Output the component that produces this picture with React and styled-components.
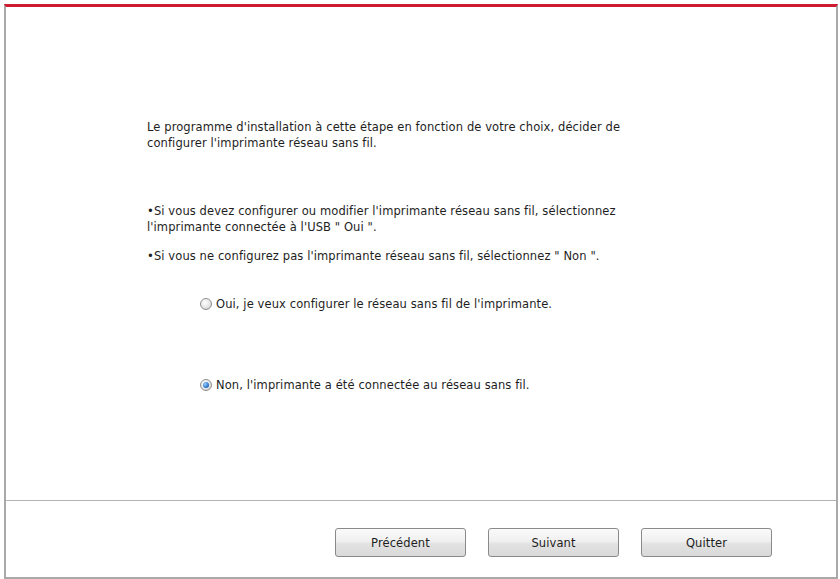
import React from "react";
import styled, { createGlobalStyle } from "styled-components";

const Global = createGlobalStyle`
  html, body { margin: 0; padding: 0; background: #ffffff; }
  body { font-family: "DejaVu Sans", "Liberation Sans", sans-serif; }
`;

const Page = styled.div`
  width: 840px;
  height: 579px;
  box-sizing: border-box;
  padding: 4px 2px 0 4px;
  background: #ffffff;
`;

const Window = styled.div`
  height: 100%;
  box-sizing: border-box;
  display: flex;
  flex-direction: column;
  border-top: 3px solid #cf1b2f;
  border-left: 2px solid #a9a9a9;
  border-right: 2px solid #a9a9a9;
  border-bottom: 2px solid #a9a9a9;
  background: #ffffff;
`;

const Content = styled.div`
  flex: 1;
  display: flex;
  flex-direction: column;
  padding: 112px 0 0 141px;
  color: #1e1e1e;
  font-size: 11.5px;
  line-height: 16px;
  letter-spacing: 0.1px;
`;

const Para = styled.p`
  margin: 0 0 ${(p) => p.$gap || 0}px 0;
  width: 540px;
`;

const Options = styled.div`
  display: flex;
  flex-direction: column;
  gap: 65px;
  padding: 32px 0 0 53px;
`;

const Option = styled.label`
  display: flex;
  align-items: center;
  gap: 4px;
`;

const Radio = styled.span`
  width: 12px;
  height: 12px;
  flex: none;
  border-radius: 50%;
  box-sizing: border-box;
  border: 1px solid #8f8f8f;
  background: radial-gradient(circle at 40% 35%, #ffffff 0%, #e6e6e6 55%, #c4c4c4 100%);
  display: flex;
  align-items: center;
  justify-content: center;
  &::after {
    content: "";
    display: ${(p) => (p.$checked ? "block" : "none")};
    width: 6px;
    height: 6px;
    border-radius: 50%;
    background: radial-gradient(circle at 35% 35%, #9ad0ff 0%, #2f77cc 60%, #1a4f95 100%);
  }
`;

const Separator = styled.div`
  height: 1px;
  background: #b4b4b4;
`;

const Footer = styled.div`
  height: 76px;
  display: flex;
  justify-content: flex-end;
  align-items: flex-start;
  gap: 22px;
  padding: 27px 64px 0 0;
  box-sizing: border-box;
`;

const Button = styled.button`
  width: 131px;
  height: 29px;
  box-sizing: border-box;
  border: 1px solid #8a8a8a;
  border-radius: 3px;
  background: linear-gradient(#fafafa 0%, #f0f0f0 45%, #e2e2e2 55%, #d9d9d9 100%);
  font-family: "DejaVu Sans", "Liberation Sans", sans-serif;
  font-size: 11.5px;
  letter-spacing: 0.1px;
  color: #1e1e1e;
  padding: 0;
`;

export default function App() {
  return (
    <>
      <Global />
      <Page>
        <Window>
          <Content>
            <Para $gap={52}>
              Le programme d'installation à cette étape en fonction de votre choix, décider de
              <br />
              configurer l'imprimante réseau sans fil.
            </Para>
            <Para $gap={13}>
              •Si vous devez configurer ou modifier l'imprimante réseau sans fil, sélectionnez
              <br />
              l'imprimante connectée à l'USB " Oui ".
            </Para>
            <Para>•Si vous ne configurez pas l'imprimante réseau sans fil, sélectionnez " Non ".</Para>
            <Options>
              <Option>
                <Radio />
                Oui, je veux configurer le réseau sans fil de l'imprimante.
              </Option>
              <Option>
                <Radio $checked />
                Non, l'imprimante a été connectée au réseau sans fil.
              </Option>
            </Options>
          </Content>
          <Separator />
          <Footer>
            <Button>Précédent</Button>
            <Button>Suivant</Button>
            <Button>Quitter</Button>
          </Footer>
        </Window>
      </Page>
    </>
  );
}
